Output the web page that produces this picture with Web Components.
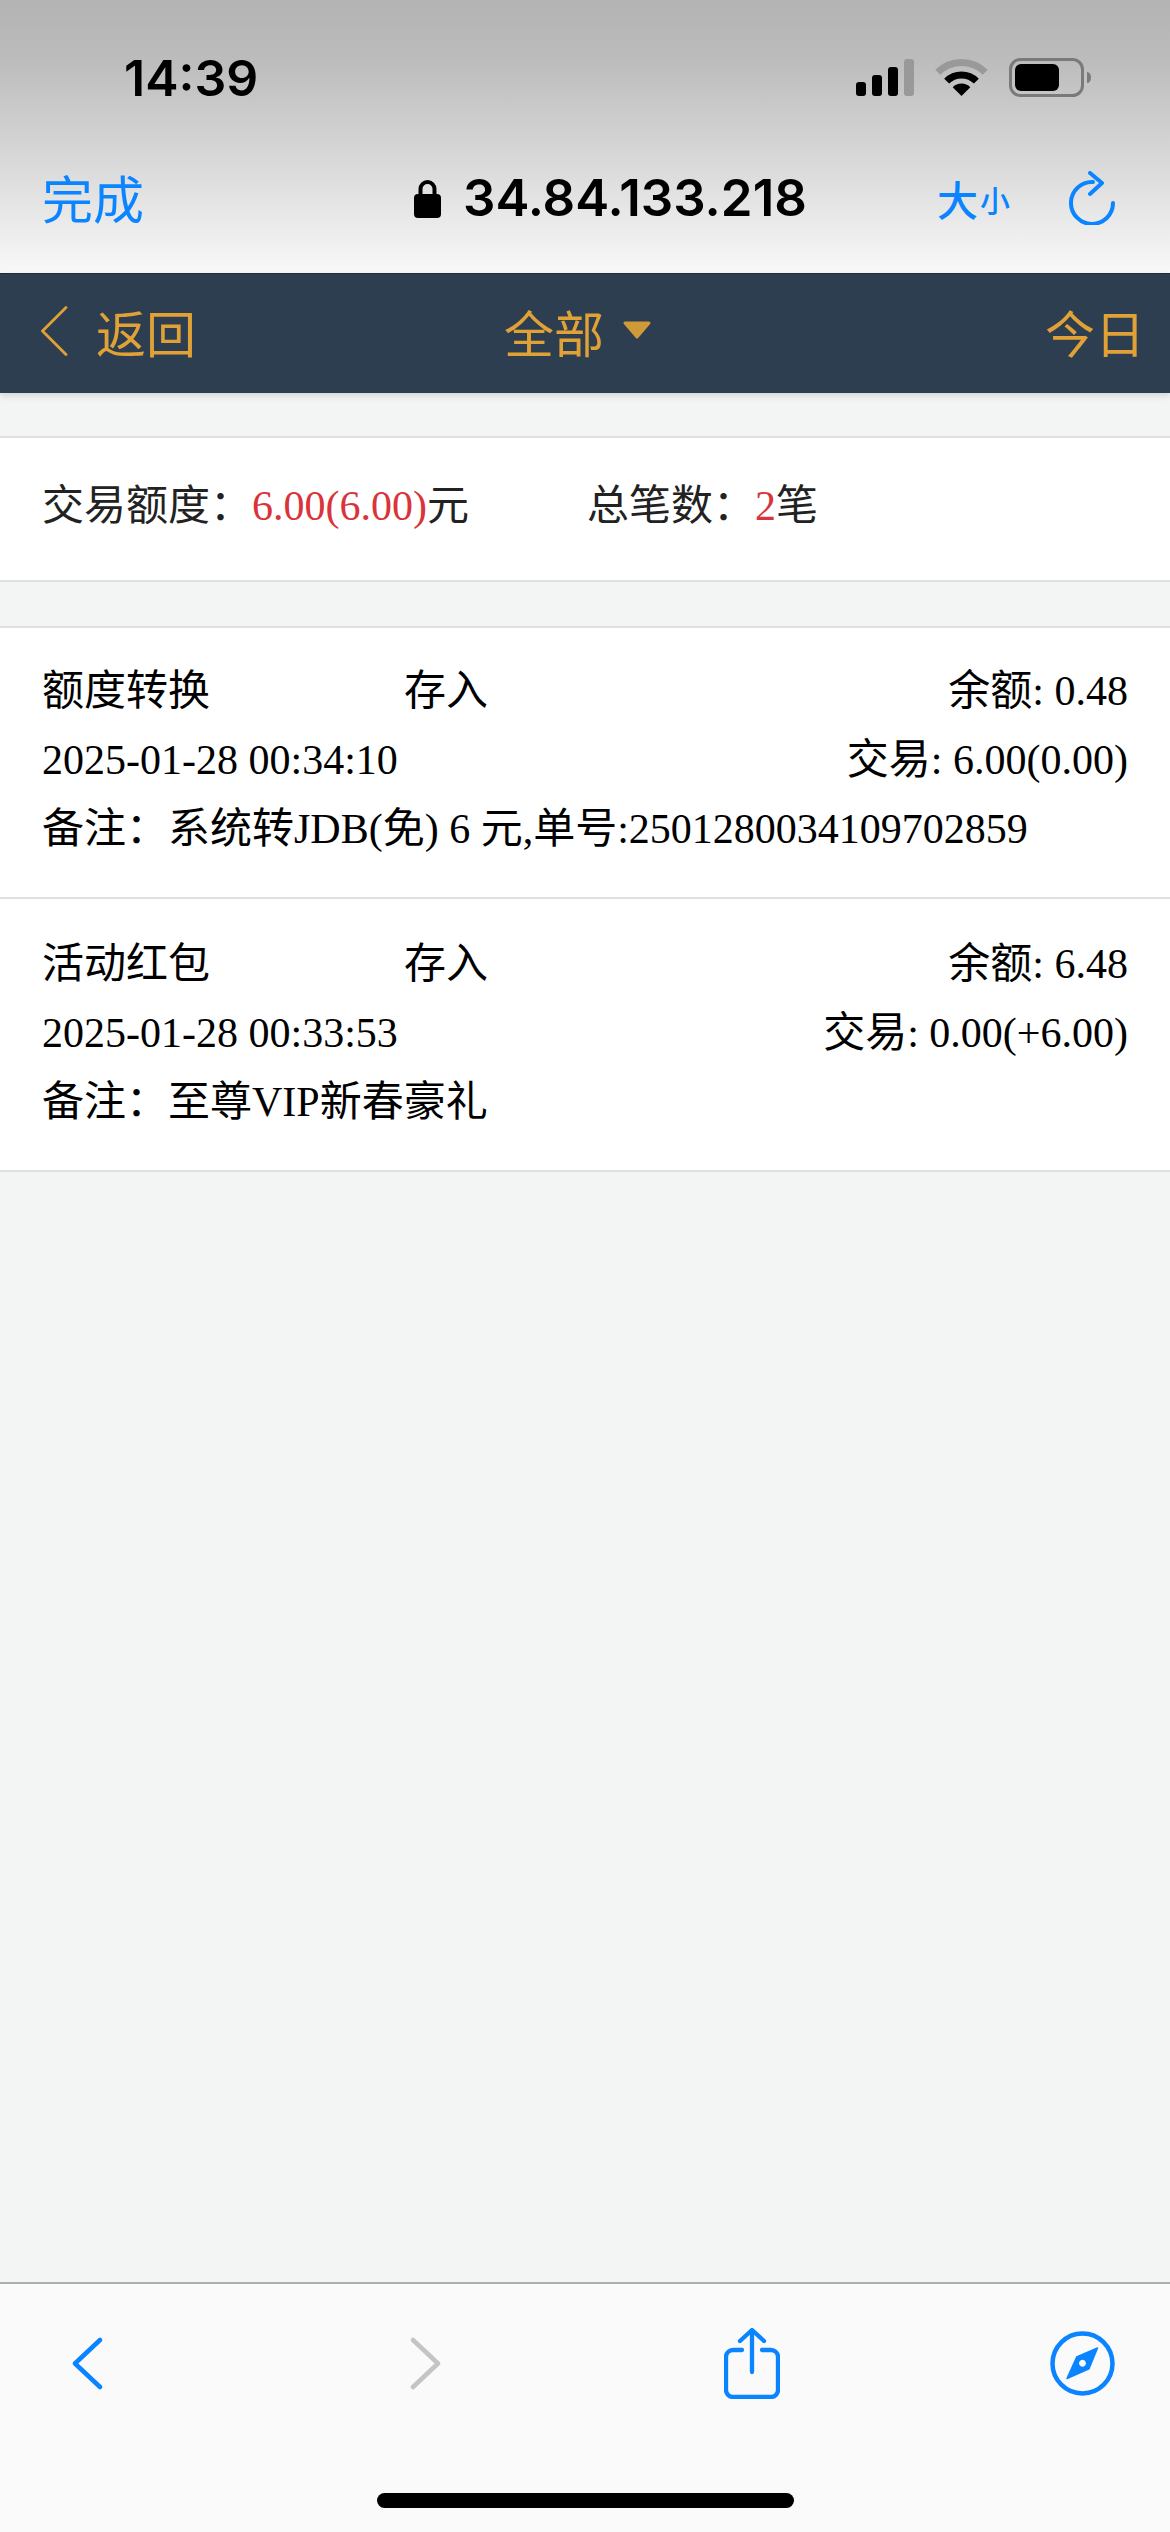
<!DOCTYPE html>
<html lang="zh">
<head>
<meta charset="utf-8">
<title>交易记录</title>
<style>
  html, body { margin: 0; padding: 0; }
  body {
    width: 1170px;
    height: 2532px;
    overflow: hidden;
    display: flex;
    flex-direction: column;
    background: #f3f5f4;
    font-family: "Liberation Serif", "Noto Sans CJK SC", serif;
  }
  tx-list { flex: 1; }
</style>
</head>
<body>
<safari-top></safari-top>
<app-nav></app-nav>
<tx-list>
  <tx-summary></tx-summary>
  <tx-row name="额度转换" time="2025-01-28 00:34:10" balance="余额: 0.48" amount="交易: 6.00(0.00)" note="系统转JDB(免) 6 元,单号:2501280034109702859"></tx-row>
  <tx-row name="活动红包" time="2025-01-28 00:33:53" balance="余额: 6.48" amount="交易: 0.00(+6.00)" note="至尊VIP新春豪礼"></tx-row>
</tx-list>
<safari-bottom></safari-bottom>

<script>
class SafariTop extends HTMLElement {
  constructor() {
    super();
    this.attachShadow({ mode: 'open' }).innerHTML = `
      <style>
        :host {
          display: block;
          height: 273px;
          box-sizing: border-box;
          background: linear-gradient(#b3b3b3 0, #bcbcbc 60px, #f8f8f8 272px);
          font-family: Inter, "Liberation Sans", sans-serif;
          color: #000;
        }
        .status {
          height: 150px;
          display: flex;
          align-items: flex-start;
          justify-content: space-between;
          padding: 58px 78px 0 124px;
          box-sizing: border-box;
        }
        .time { font-size: 50px; font-weight: 600; line-height: 40px; }
        svg { display: block; }
        .bar {
          display: grid;
          grid-template-columns: 372px auto 1fr;
          align-items: center;
          padding: 0 55px 0 42px;
          height: 96px;
        }
        .done { font: 400 51px "Noto Sans CJK SC", sans-serif; color: #0a84ff; line-height: 56px; padding-bottom: 3px; }
        .addr { display: flex; align-items: center; gap: 22px; font-size: 51px; font-weight: 600; line-height: 60px; }
        .tools { display: flex; justify-content: flex-end; align-items: center; gap: 59px; }
        .size { display: flex; align-items: flex-end; color: #0a84ff; font-family: "Noto Sans CJK SC", sans-serif; line-height: 44px; }
        .size b { font-size: 41px; font-weight: 500; }
        .size i { font-size: 30px; font-style: normal; font-weight: 500; margin-left: 2px; line-height: 42px; }
      </style>
      <div class="status">
        <span class="time">14:39</span>
        <svg width="236" height="40" viewBox="856 58 236 40">
          <rect x="856" y="82" width="10" height="14" rx="3"/>
          <rect x="872" y="75" width="10" height="21" rx="3"/>
          <rect x="888" y="67" width="10" height="29" rx="3"/>
          <rect x="904" y="59" width="10" height="37" rx="3" fill="#999"/>
          <path d="M937.800 72.300 A33.500 33.500 0 0 1 985.200 72.300" fill="none" stroke="#999" stroke-width="7"/>
          <path d="M946.650 81.150 A21 21 0 0 1 976.350 81.150" fill="none" stroke="#000" stroke-width="7"/>
          <path d="M961.500 96 L952.700 87.200 A12.500 12.500 0 0 1 970.300 87.200 Z"/>
          <rect x="1010.500" y="59.500" width="72" height="36" rx="10" fill="none" stroke="#7a7a7a" stroke-width="3"/>
          <rect x="1015" y="64" width="44" height="27" rx="6"/>
          <path d="M1087 72 a4 5.500 0 0 1 0 11 Z" fill="#7a7a7a"/>
        </svg>
      </div>
      <div class="bar">
        <span class="done">完成</span>
        <span class="addr">
          <svg width="27" height="39" viewBox="0 0 27 39"><path d="M6.500 17V10a7 7 0 0 1 14 0v7" fill="none" stroke="#000" stroke-width="4"/><rect x="0" y="15" width="27" height="24" rx="4"/></svg>
          34.84.133.218
        </span>
        <div class="tools">
          <span class="size"><b>大</b><i>小</i></span>
          <svg width="46" height="54" viewBox="1067 171 46 54" fill="none" stroke="#0a84ff" stroke-width="4" stroke-linecap="round" stroke-linejoin="round">
            <path d="M1091 182 A21 21 0 1 0 1111 203"/>
            <path d="M1088 173 L1100 183 L1088 194"/>
          </svg>
        </div>
      </div>`;
  }
}

class AppNav extends HTMLElement {
  constructor() {
    super();
    this.attachShadow({ mode: 'open' }).innerHTML = `
      <style>
        :host {
          display: grid;
          grid-template-columns: 1fr auto 1fr;
          align-items: center;
          height: 120px;
          box-sizing: border-box;
          padding: 0 25px 6px 41px;
          background: #2c3e50;
          border-top: 1px solid #1f2b38;
          color: #e0a236;
          font: 400 50px/60px "Noto Sans CJK SC", sans-serif;
          box-shadow: 0 3px 6px rgba(0,0,0,.12);
          position: relative;
        }
        .back { display: flex; align-items: center; gap: 28px; }
        .mid { display: flex; align-items: center; gap: 18px; margin-right: 30px; }
        .right { justify-self: end; }
        svg { display: block; }
      </style>
      <span class="back">
        <svg width="27" height="50" viewBox="0 0 27 50" fill="none" stroke="#e0a236" stroke-width="2.800" stroke-linecap="round"><path d="M25 1.500 L1.500 25 L25 48.500"/></svg>
        <span>返回</span>
      </span>
      <span class="mid"><span>全部</span>
        <svg width="30" height="19" viewBox="0 0 30 19"><path d="M3 2 H27 L15 16 Z" fill="#cf9a38" stroke="#cf9a38" stroke-width="3" stroke-linejoin="round"/></svg>
      </span>
      <span class="right">今日</span>`;
  }
}

class TxList extends HTMLElement {
  constructor() {
    super();
    this.attachShadow({ mode: 'open' }).innerHTML = `
      <style>
        :host { display: block; padding-top: 43px; }
        ::slotted(tx-summary) { margin-bottom: 44px; }
      </style>
      <slot></slot>`;
  }
}

class TxSummary extends HTMLElement {
  constructor() {
    super();
    this.attachShadow({ mode: 'open' }).innerHTML = `
      <style>
        :host {
          display: flex;
          align-items: center;
          height: 146px;
          box-sizing: border-box;
          padding: 0 0 6px 42px;
          background: #fff;
          border-top: 2px solid #e0e0e0;
          border-bottom: 2px solid #e0e0e0;
          font-size: 42px;
          line-height: 69px;
          color: #222;
        }
        .total { margin-left: 118px; }
        em { font-style: normal; color: #d9343a; }
      </style>
      <span>交易额度：<em>6.00(6.00)</em>元</span>
      <span class="total">总笔数：<em>2</em>笔</span>`;
  }
}

class TxRow extends HTMLElement {
  constructor() {
    super();
    this.attachShadow({ mode: 'open' }).innerHTML = `
      <style>
        :host {
          display: block;
          height: 273px;
          box-sizing: border-box;
          padding: 31px 42px 0;
          background: #fff;
          border-bottom: 2px solid #e0e0e0;
          font-size: 42px;
          line-height: 69px;
          color: #000;
        }
        :host(:first-of-type) { border-top: 2px solid #e0e0e0; padding-top: 29px; }
        .line { display: flex; justify-content: space-between; white-space: nowrap; }
        .name { width: 362px; }
        .first { justify-content: flex-start; }
        .first .bal { margin-left: auto; }
      </style>
      <div class="line first"><span class="name"></span><span>存入</span><span class="bal"></span></div>
      <div class="line"><span class="time"></span><span class="amt"></span></div>
      <div class="line"><span>备注：<span class="note"></span></span></div>`;
  }

  connectedCallback() {
    const root = this.shadowRoot;
    root.querySelector('.name').textContent = this.getAttribute('name');
    root.querySelector('.bal').textContent = this.getAttribute('balance');
    root.querySelector('.time').textContent = this.getAttribute('time');
    root.querySelector('.amt').textContent = this.getAttribute('amount');
    root.querySelector('.note').textContent = this.getAttribute('note');
  }
}

class SafariBottom extends HTMLElement {
  constructor() {
    super();
    this.attachShadow({ mode: 'open' }).innerHTML = `
      <style>
        :host {
          display: block;
          height: 250px;
          box-sizing: border-box;
          background: #fafafa;
          border-top: 2px solid #adadad;
        }
        .tools {
          display: flex;
          align-items: center;
          height: 158px;
          padding-left: 72px;
        }
        svg { display: block; }
        .fwd { margin-left: 307px; }
        .share { margin-left: 283px; }
        .compass { margin-left: 270px; }
        .home { width: 417px; height: 15px; margin: 51px auto 0; background: #000; border-radius: 8px; }
      </style>
      <div class="tools">
        <svg width="31" height="53" viewBox="0 0 31 53" fill="none" stroke="#0a84ff" stroke-width="4.500" stroke-linecap="round" stroke-linejoin="round"><path d="M28 3 L3 26.500 L28 50"/></svg>
        <svg class="fwd" width="31" height="53" viewBox="0 0 31 53" fill="none" stroke="#c4c4c4" stroke-width="4.500" stroke-linecap="round" stroke-linejoin="round"><path d="M3 3 L28 26.500 L3 50"/></svg>
        <svg class="share" width="56" height="71" viewBox="0 0 56 71" fill="none" stroke="#0a84ff" stroke-width="4.300" stroke-linecap="round" stroke-linejoin="round"><path d="M18 22 H9 a7 7 0 0 0 -7 7 V62 a7 7 0 0 0 7 7 H47 a7 7 0 0 0 7 -7 V29 a7 7 0 0 0 -7 -7 H38"/><path d="M28 44 V3 M16 13 L28 2 L40 13"/></svg>
        <svg class="compass" width="65" height="65" viewBox="0 0 65 65"><circle cx="32.500" cy="32.500" r="30" fill="none" stroke="#0a84ff" stroke-width="4.500"/><path fill-rule="evenodd" fill="#0a84ff" stroke="#0a84ff" stroke-width="1.500" stroke-linejoin="round" d="M47.500 17 L39 37.700 L17 47.500 L26.700 26 Z M32.500 28 a4.200 4.200 0 1 0 .01 0 Z"/></svg>
      </div>
      <div class="home"></div>`;
  }
}

customElements.define('safari-top', SafariTop);
customElements.define('app-nav', AppNav);
customElements.define('tx-list', TxList);
customElements.define('tx-summary', TxSummary);
customElements.define('tx-row', TxRow);
customElements.define('safari-bottom', SafariBottom);
</script>
</body>
</html>
